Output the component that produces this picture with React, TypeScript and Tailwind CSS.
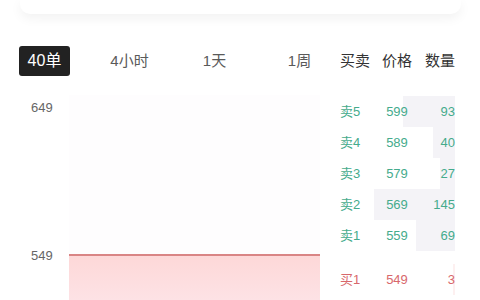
import React from "react";

const font = { fontFamily: '"Liberation Sans", "Noto Sans CJK SC", sans-serif' };

const sells = [
  { l: "卖5", p: 599, q: 93 },
  { l: "卖4", p: 589, q: 40 },
  { l: "卖3", p: 579, q: 27 },
  { l: "卖2", p: 569, q: 145 },
  { l: "卖1", p: 559, q: 69 },
];
const buys = [{ l: "买1", p: 549, q: 3 }];
const MAX = 145;
const BARW = 81;

function Row({ l, p, q, sell }: { l: string; p: number; q: number; sell: boolean }) {
  const color = sell ? "text-[#45ab8c]" : "text-[#d8686c]";
  return (
    <div className={`relative flex h-[31px] items-center text-[13px] ${color}`}>
      <div
        className={`absolute right-0 top-0 h-full ${sell ? "bg-[#f4f3f7]" : "bg-[#fdf0f0]"}`}
        style={{ width: Math.max(1, (q / MAX) * BARW) }}
      />
      <span className="relative w-[42px]">{l}</span>
      <span className="relative w-[30px] text-center">{p}</span>
      <span className="relative flex-1 text-right">{q}</span>
    </div>
  );
}

export default function App() {
  return (
    <div className="w-[480px] h-[300px] overflow-hidden bg-white" style={font}>
      <div className="ml-[20px] w-[441px] h-[14px] bg-white rounded-b-[10px] shadow-[0_4px_12px_rgba(0,0,0,0.06)]" />
      <div className="flex mt-[32px]">
        {/* left */}
        <div className="w-[330px] shrink-0">
          <div className="flex h-[30px] items-center pl-[2px] text-[15px] text-[#5a5a5a]">
            <div className="w-[85px] shrink-0 flex justify-center">
              <div className="w-[51px] h-[30px] rounded-[3px] bg-[#222] text-white flex items-center justify-center text-[16px]">
                40单
              </div>
            </div>
            <div className="w-[85px] shrink-0 text-center">4小时</div>
            <div className="w-[85px] shrink-0 text-center">1天</div>
            <div className="w-[85px] shrink-0 text-center">1周</div>
          </div>
          <div className="relative mt-[19px] h-[205px]">
            <div className="absolute left-[69px] top-0 w-[251px] h-full bg-[#fefdfe]" />
            <div className="absolute left-[31px] top-[3px] text-[13px] text-[#666]">649</div>
            <div className="absolute left-[31px] top-[151px] text-[13px] text-[#666]">549</div>
            <div className="absolute left-[69px] top-[159px] w-[251px] h-[46px] bg-gradient-to-b from-[#fdd8d8] to-[#fde2e5] border-t-2 border-[#d98585]" />
          </div>
        </div>
        {/* right */}
        <div className="ml-[10px] w-[115px] shrink-0">
          <div className="flex h-[30px] items-center text-[15px] text-[#333]">
            <span className="w-[42px]">买卖</span>
            <span className="w-[30px] text-center whitespace-nowrap">价格</span>
            <span className="flex-1 text-right">数量</span>
          </div>
          <div className="mt-[20px]">
            {sells.map((r) => (
              <Row key={r.l} {...r} sell />
            ))}
          </div>
          <div className="mt-[13px]">
            {buys.map((r) => (
              <Row key={r.l} {...r} sell={false} />
            ))}
          </div>
        </div>
      </div>
    </div>
  );
}
